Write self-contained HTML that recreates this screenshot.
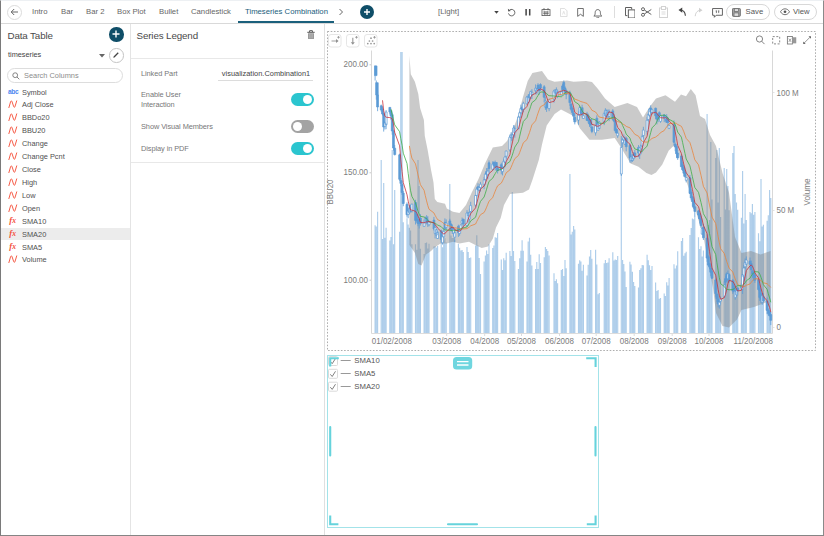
<!DOCTYPE html>
<html><head><meta charset="utf-8"><title>Timeseries Combination</title>
<style>
*{box-sizing:border-box;margin:0;padding:0}
html,body{width:824px;height:536px;overflow:hidden;background:#fff}
body{position:relative;font-family:"Liberation Sans",sans-serif;color:#555;font-size:8px}
.abs{position:absolute}
#frame{position:absolute;left:0;top:0;width:824px;height:536px;border-left:1px solid #7a7a7a;border-right:1px solid #8a8a8a;border-bottom:1.5px solid #858585;border-top:1.600px solid #edf0f3;pointer-events:none;z-index:50}
#topbar{position:absolute;left:0;top:0;width:824px;height:24px;border-bottom:1.600px solid #d9d9d9;background:#fff}
.tab{position:absolute;top:7.1px;font-size:7.720px;color:#666;white-space:nowrap;line-height:10px}
.tab.act{color:#1b607c}
#actline{position:absolute;left:238px;top:21.100px;width:96px;height:2.200px;background:#1b607c}
.circ{position:absolute;border-radius:50%}
.t10{font-size:9.800px;color:#4a4a4a;letter-spacing:-.13px}
.os{letter-spacing:0}
#left{position:absolute;left:1px;top:24px;width:130px;height:511px;border-right:1px solid #e4e4e4}
#mid{position:absolute;left:131px;top:24px;width:194px;height:511px;border-right:1px solid #e0e0e0}
.row{position:absolute;left:1px;width:129px;height:13px;line-height:13px;font-size:7.4px;color:#505050;white-space:nowrap}
.row.sel{background:#ececec;height:12.100px}
.row .ic{position:absolute;left:7px;top:1.800px}
.row .abc{top:-.600px;left:7px;font-size:6.600px;font-weight:bold;color:#4d86f0;letter-spacing:-.3px}
.row .fx{top:-.700px;left:8.300px;font-size:8px;color:#f4503c;font-family:"Liberation Serif",serif;font-weight:bold}
.row .fx i{font-size:8.600px}.row .fx i.x{font-size:7.600px;margin-left:.2px}
.row .nm{position:absolute;left:21px;top:0}
.lbl{position:absolute;font-size:7.4px;letter-spacing:-.08px;color:#777;line-height:10px;white-space:nowrap}
.tog{position:absolute;left:291.300px;width:22.400px;height:12.800px;border-radius:7px;background:#2bc5cf}
.tog i{position:absolute;top:1.700px;right:1.700px;width:9.400px;height:9.400px;border-radius:50%;background:#fff}
.tog.off{background:#a3a3a3}
.tog.off i{right:auto;left:1.700px}
.ax{font-size:8.900px;fill:#7c7c7c;font-family:"Liberation Sans",sans-serif}
</style></head><body>
<div id="topbar">
  <div class="circ" style="left:7px;top:4.5px;width:15px;height:15px;border:1px solid #dcdcdc"></div>
  <svg class="abs" style="left:10px;top:8px" width="9" height="8" viewBox="0 0 9 8"><path d="M8 4H1.5M4.2 1L1.2 4l3 3" fill="none" stroke="#666" stroke-width="1"/></svg>
  <span class="tab" style="left:32px">Intro</span>
  <span class="tab" style="left:61px">Bar</span>
  <span class="tab" style="left:86px">Bar 2</span>
  <span class="tab" style="left:117px">Box Plot</span>
  <span class="tab" style="left:159px">Bullet</span>
  <span class="tab" style="left:191px">Candlestick</span>
  <span class="tab act" style="left:245px">Timeseries Combination</span>
  <div id="actline"></div>
  <svg class="abs" style="left:338px;top:8px" width="6" height="8" viewBox="0 0 6 8"><path d="M1.5 1l3 3-3 3" fill="none" stroke="#666" stroke-width="1"/></svg>
  <div class="circ" style="left:360px;top:5px;width:14px;height:14px;background:#0f4e68"></div>
  <svg class="abs" style="left:363px;top:8px" width="8" height="8" viewBox="0 0 8 8"><path d="M4 1v6M1 4h6" stroke="#fff" stroke-width="1.4"/></svg>
  <span class="tab" style="left:438px;color:#666">[Light]</span>
  <svg class="abs" style="left:494px;top:11.200px" width="5" height="3" viewBox="0 0 6 4"><path d="M0 0h6L3 3.500z" fill="#444"/></svg>
  <!-- refresh -->
  <svg class="abs" style="left:506.500px;top:8.200px" width="9" height="9" viewBox="0 0 10 10"><path d="M3 2.2A3.6 3.6 0 1 1 1.6 6" fill="none" stroke="#555" stroke-width="1"/><path d="M1 .8l.3 3 3-.6z" fill="#555"/></svg>
  <!-- pause -->
  <svg class="abs" style="left:524.800px;top:9.200px" width="6" height="6.500" viewBox="0 0 6 6.500"><path d="M1.100 0v6.500M4.700 0v6.500" stroke="#444" stroke-width="1.500"/></svg>
  <!-- calendar -->
  <svg class="abs" style="left:540.800px;top:8.300px" width="10" height="8" viewBox="0 0 11 10"><rect x=".5" y="2" width="10" height="7.5" fill="none" stroke="#555"/><path d="M3 0v3M8 0v3M2 5h7M2 7h7M4 4v5M7 4v5" stroke="#555" stroke-width=".9"/></svg>
  <!-- pdf disabled -->
  <svg class="abs" style="left:560.300px;top:8px" width="7.500" height="9" viewBox="0 0 9 11"><path d="M.5.5h5l3 3v7h-8z" fill="none" stroke="#d5d5d5"/><path d="M3 8l1.5-4L6 8" fill="none" stroke="#d5d5d5" stroke-width=".8"/></svg>
  <!-- bookmark -->
  <svg class="abs" style="left:577.300px;top:8.400px" width="7" height="9.200" viewBox="0 0 8 11"><path d="M.6.6h6.8v9.4L4 7.5.6 10z" fill="none" stroke="#555" stroke-width="1"/></svg>
  <!-- bell -->
  <svg class="abs" style="left:593.300px;top:7.600px" width="9.600" height="10.500" viewBox="0 0 11 12"><path d="M1 9.2h9c-1.3-1-1.5-2-1.5-4 0-2-1.300-3.400-3-3.400S2.500 3.200 2.500 5.200c0 2-.2 3-1.500 4z" fill="none" stroke="#555" stroke-width="1"/><path d="M4.300 10.300a1.200 1.200 0 0 0 2.400 0" fill="none" stroke="#555" stroke-width=".9"/></svg>
  <div class="abs" style="left:614px;top:6px;width:1px;height:12px;background:#ddd"></div>
  <!-- copy -->
  <svg class="abs" style="left:624.500px;top:6.500px" width="10.500" height="11.500" viewBox="0 0 11 12"><path d="M.5.5h6.500v2M.5.500v8.500h2" fill="none" stroke="#555"/><rect x="3.500" y="3" width="7" height="8.500" fill="#fff" stroke="#555"/></svg>
  <!-- scissors -->
  <svg class="abs" style="left:641px;top:7px" width="11" height="10" viewBox="0 0 11 10"><circle cx="2" cy="2.200" r="1.500" fill="none" stroke="#555" stroke-width=".9"/><circle cx="2" cy="7.800" r="1.500" fill="none" stroke="#555" stroke-width=".9"/><path d="M3.300 3l7 4.500M3.300 7l7-4.500" stroke="#555" stroke-width=".9"/></svg>
  <!-- paste disabled -->
  <svg class="abs" style="left:659px;top:6px" width="9" height="12" viewBox="0 0 9 12"><rect x=".5" y="2" width="8" height="9.500" fill="none" stroke="#d2d2d2"/><rect x="2.500" y=".5" width="4" height="3" fill="#fff" stroke="#d2d2d2"/><path d="M2.500 6h4M2.500 8h4" stroke="#d2d2d2" stroke-width=".8"/></svg>
  <!-- undo -->
  <svg class="abs" style="left:677.500px;top:7px" width="9.500" height="9.500" viewBox="0 0 10 10"><path d="M2 3.200c3 0 5.500 2 5.800 6" fill="none" stroke="#444" stroke-width="1.200"/><path d="M.5 3.200L4.500.4v5.600z" fill="#444"/></svg>
  <!-- redo disabled -->
  <svg class="abs" style="left:693px;top:7px" width="10" height="10" viewBox="0 0 10 10"><path d="M8 3.200c-3 0-5.500 2-5.800 6" fill="none" stroke="#d0d0d0" stroke-width="1"/><path d="M9.500 3.200L6 .8v4.800z" fill="#d0d0d0"/></svg>
  <!-- comment -->
  <svg class="abs" style="left:711.500px;top:8px" width="11" height="10" viewBox="0 0 12 11"><path d="M.6.600h10.800v7.400H4.500L2.500 10.200V8H.6z" fill="none" stroke="#555" stroke-width="1"/><path d="M4 3.200h1.500M6.500 3.200H8M4.800 3.200v2.400M7.300 3.200v2.400" stroke="#555" stroke-width=".8"/></svg>
  <!-- save -->
  <div class="abs" style="left:725.800px;top:4.400px;width:44px;height:15.300px;border:1px solid #d8d8d8;border-radius:8px"></div>
  <svg class="abs" style="left:732.200px;top:7.800px" width="8.800" height="8.800" viewBox="0 0 10 10"><rect x=".5" y=".5" width="9" height="9" rx="1" fill="#a8a8a8" stroke="#666"/><rect x="2.600" y=".8" width="4.800" height="3" fill="#ddd" stroke="#666" stroke-width=".8"/><rect x="2.300" y="5.600" width="5.400" height="3.800" fill="#ddd" stroke="#666" stroke-width=".8"/></svg>
  <span class="tab" style="left:745.600px;color:#555">Save</span>
  <!-- view -->
  <div class="abs" style="left:773.900px;top:4.400px;width:43px;height:15.300px;border:1px solid #d8d8d8;border-radius:8px"></div>
  <svg class="abs" style="left:780.200px;top:8.400px" width="10" height="7.500" viewBox="0 0 11 8"><path d="M.5 4C2 1.500 3.800.800 5.500.800S9 1.500 10.500 4C9 6.500 7.200 7.200 5.500 7.200S2 6.500.5 4z" fill="none" stroke="#555" stroke-width=".9"/><circle cx="5.500" cy="4" r="1.500" fill="#555"/></svg>
  <span class="tab" style="left:793px;color:#555">View</span>
</div>

<div id="left"></div>
<div class="abs t10" style="left:7.500px;top:28.900px;line-height:13px">Data Table</div>
<div class="circ" style="left:109px;top:27.200px;width:14.500px;height:14.500px;background:#0f4e68"></div>
<svg class="abs" style="left:112.250px;top:30.450px" width="8" height="8" viewBox="0 0 8 8"><path d="M4 .5v7M.5 4h7" stroke="#fff" stroke-width="1.400"/></svg>
<div class="abs os" style="left:8px;top:50.300px;font-size:7.3px;color:#444;line-height:10px">timeseries</div>
<svg class="abs" style="left:99px;top:53.500px" width="6" height="4" viewBox="0 0 6 4"><path d="M0 0h6L3 3.500z" fill="#666"/></svg>
<div class="circ" style="left:109px;top:48px;width:14.500px;height:14.500px;border:1px solid #c4c4c4"></div>
<svg class="abs" style="left:112.250px;top:51.250px" width="8" height="8" viewBox="0 0 8 8"><path d="M1.300 6.700l.3-1.200L5.800 1.300l.9.900L2.500 6.400z" fill="#444"/></svg>
<div class="abs" style="left:7px;top:68px;width:116px;height:15px;border:1px solid #ddd;border-radius:8px"></div>
<svg class="abs" style="left:12px;top:72px" width="8" height="8" viewBox="0 0 8 8"><circle cx="3.200" cy="3.200" r="2.400" fill="none" stroke="#777" stroke-width=".9"/><path d="M5 5l2.300 2.300" stroke="#777" stroke-width=".9"/></svg>
<div class="abs os" style="left:24px;top:70.500px;font-size:7.4px;color:#8c8c8c;line-height:10px">Search Columns</div>
<div class="row" style="top:85.50px"><span class="ic abc">abc</span><span class="nm">Symbol</span></div>
<div class="row" style="top:98.42px"><svg class="ic" width="10" height="9" viewBox="0 0 10 9"><path d="M.9 7.6L2.600 1.700C2.900.700 3.600.600 4 1.600L5.700 6.600C6 7.600 6.700 7.500 7 6.500L8.700.900" fill="none" stroke="#f5543f" stroke-width=".95" stroke-linecap="round"/></svg><span class="nm">Adj Close</span></div>
<div class="row" style="top:111.34px"><svg class="ic" width="10" height="9" viewBox="0 0 10 9"><path d="M.9 7.6L2.600 1.700C2.900.700 3.600.600 4 1.600L5.700 6.600C6 7.600 6.700 7.500 7 6.500L8.700.900" fill="none" stroke="#f5543f" stroke-width=".95" stroke-linecap="round"/></svg><span class="nm">BBDo20</span></div>
<div class="row" style="top:124.26px"><svg class="ic" width="10" height="9" viewBox="0 0 10 9"><path d="M.9 7.6L2.600 1.700C2.900.700 3.600.600 4 1.600L5.700 6.600C6 7.600 6.700 7.500 7 6.500L8.700.900" fill="none" stroke="#f5543f" stroke-width=".95" stroke-linecap="round"/></svg><span class="nm">BBU20</span></div>
<div class="row" style="top:137.18px"><svg class="ic" width="10" height="9" viewBox="0 0 10 9"><path d="M.9 7.6L2.600 1.700C2.900.700 3.600.600 4 1.600L5.700 6.600C6 7.600 6.700 7.500 7 6.500L8.700.900" fill="none" stroke="#f5543f" stroke-width=".95" stroke-linecap="round"/></svg><span class="nm">Change</span></div>
<div class="row" style="top:150.10px"><svg class="ic" width="10" height="9" viewBox="0 0 10 9"><path d="M.9 7.6L2.600 1.700C2.900.700 3.600.600 4 1.600L5.700 6.600C6 7.600 6.700 7.500 7 6.500L8.700.900" fill="none" stroke="#f5543f" stroke-width=".95" stroke-linecap="round"/></svg><span class="nm">Change Pcnt</span></div>
<div class="row" style="top:163.02px"><svg class="ic" width="10" height="9" viewBox="0 0 10 9"><path d="M.9 7.6L2.600 1.700C2.900.700 3.600.600 4 1.600L5.700 6.600C6 7.600 6.700 7.500 7 6.500L8.700.900" fill="none" stroke="#f5543f" stroke-width=".95" stroke-linecap="round"/></svg><span class="nm">Close</span></div>
<div class="row" style="top:175.94px"><svg class="ic" width="10" height="9" viewBox="0 0 10 9"><path d="M.9 7.6L2.600 1.700C2.900.700 3.600.600 4 1.600L5.700 6.600C6 7.600 6.700 7.500 7 6.500L8.700.900" fill="none" stroke="#f5543f" stroke-width=".95" stroke-linecap="round"/></svg><span class="nm">High</span></div>
<div class="row" style="top:188.86px"><svg class="ic" width="10" height="9" viewBox="0 0 10 9"><path d="M.9 7.6L2.600 1.700C2.900.700 3.600.600 4 1.600L5.700 6.600C6 7.600 6.700 7.500 7 6.500L8.700.900" fill="none" stroke="#f5543f" stroke-width=".95" stroke-linecap="round"/></svg><span class="nm">Low</span></div>
<div class="row" style="top:201.78px"><svg class="ic" width="10" height="9" viewBox="0 0 10 9"><path d="M.9 7.6L2.600 1.700C2.900.700 3.600.600 4 1.600L5.700 6.600C6 7.600 6.700 7.500 7 6.500L8.700.900" fill="none" stroke="#f5543f" stroke-width=".95" stroke-linecap="round"/></svg><span class="nm">Open</span></div>
<div class="row" style="top:214.70px"><span class="ic fx"><i>f</i><i class="x">x</i></span><span class="nm">SMA10</span></div>
<div class="row sel" style="top:227.62px"><span class="ic fx"><i>f</i><i class="x">x</i></span><span class="nm">SMA20</span></div>
<div class="row" style="top:240.54px"><span class="ic fx"><i>f</i><i class="x">x</i></span><span class="nm">SMA5</span></div>
<div class="row" style="top:253.46px"><svg class="ic" width="10" height="9" viewBox="0 0 10 9"><path d="M.9 7.6L2.600 1.700C2.900.700 3.600.600 4 1.600L5.700 6.600C6 7.600 6.700 7.500 7 6.500L8.700.900" fill="none" stroke="#f5543f" stroke-width=".95" stroke-linecap="round"/></svg><span class="nm">Volume</span></div>

<div id="mid"></div>
<div class="abs t10" style="left:136.500px;top:28.900px;line-height:13px">Series Legend</div>
<svg class="abs" style="left:306.500px;top:29.800px" width="8" height="10" viewBox="0 0 8 10"><path d="M.3 2.300h7.400M2.600 2V.7h2.800V2" fill="none" stroke="#555" stroke-width="1"/><path d="M1 3.200h6v5.300q0 .6-.6.600H1.600q-.6 0-.6-.6z" fill="#9a9a9a"/><path d="M2.700 4v4.300M4 4v4.300M5.300 4v4.300" stroke="#c4c4c4" stroke-width=".5"/></svg>
<div class="abs" style="left:131px;top:58px;width:193px;height:1px;background:#e8e8e8"></div>
<div class="lbl" style="left:141px;top:68.500px">Linked Part</div>
<div class="lbl" style="left:221.800px;top:68.500px;color:#444;letter-spacing:.02px">visualization.Combination1</div>
<div class="abs" style="left:218px;top:79.600px;width:95px;height:1px;background:#dcdcdc"></div>
<div class="lbl" style="left:141px;top:90.400px">Enable User<br>Interaction</div>
<div class="tog" style="top:93.300px"><i></i></div>
<div class="lbl" style="left:141px;top:122.300px">Show Visual Members</div>
<div class="tog off" style="top:120.200px"><i></i></div>
<div class="lbl" style="left:141px;top:143.800px">Display in PDF</div>
<div class="tog" style="top:142.200px"><i></i></div>
<div class="abs" style="left:131px;top:162px;width:193px;height:1px;background:#e8e8e8"></div>

<!-- chart -->
<svg class="abs" style="left:0;top:0" width="824" height="536" viewBox="0 0 824 536">
<rect x="327.500" y="31.500" width="488" height="319" fill="none" stroke="#adadad" stroke-width="1" stroke-dasharray="1.600 1.600"/>
<g fill="#fff" stroke="#e6e6e6" stroke-width="1">
<rect x="328.500" y="34.500" width="12.500" height="12.500" rx="2.500"/><rect x="346.500" y="34.500" width="12.500" height="12.500" rx="2.500"/><rect x="364.500" y="34.500" width="12.500" height="12.500" rx="2.500"/>
</g>
<g stroke="#909090" stroke-width=".8" fill="none">
<path d="M331.500 41h5M352.800 37.800v5" stroke-width="1.200" stroke="#a0a0a0"/>
<path d="M338.500 36v2.600M337.200 37.300h2.600M356.500 36v2.600M355.200 37.300h2.600M374.500 36v2.600M373.200 37.300h2.600"/>
</g>
<path d="M336 39l2.600 2-2.600 2zM350.800 42.200l2 2.600 2-2.600z" fill="#909090"/>
<g fill="#959595"><circle cx="371" cy="38.200" r=".85"/><circle cx="369.400" cy="41" r=".85"/><circle cx="372.600" cy="41" r=".85"/><circle cx="367.800" cy="43.600" r=".85"/><circle cx="371" cy="43.600" r=".85"/><circle cx="374.200" cy="43.600" r=".85"/></g>
<!-- right icons -->
<g fill="none" stroke="#7d7d7d" stroke-width=".95">
<circle cx="759.500" cy="39" r="3.100"/><path d="M761.700 41.300l2.800 2.800"/>
<rect x="772.700" y="36.600" width="7" height="7.300" stroke-dasharray="2 1.600" stroke-width=".9"/>
<rect x="787.400" y="36.500" width="5" height="7.500" stroke-width=".9"/>
<path d="M788.800 38.600l2.300 3.300M791.100 38.600l-2.300 3.300" stroke-width=".7"/>
<path d="M804.200 43l5.800-5.800" stroke-width=".8"/>
</g>
<rect x="792.800" y="37.300" width="3.500" height="6" fill="#aaa"/>
<path d="M793.800 37.300v6M795.200 37.300v6" stroke="#777" stroke-width=".5"/>
<path d="M811 36.300v2.500l-2.500-2.500zM803.200 44v-2.500l2.500 2.500z" fill="#666"/>
<!-- axes -->
<path d="M371.500 50.500v283M772.500 333.500V50.500" fill="none" stroke="#d8d8d8" stroke-width="1"/><path d="M371.500 333.500H772.500M446.700 333.500v2.500M484.700 333.500v2.500M521.500 333.500v2.500M559.500 333.500v2.500M596.200 333.500v2.500M634.200 333.500v2.500M672.200 333.500v2.500M709 333.500v2.500" fill="none" stroke="#dcdcdc" stroke-width="1"/>
<path d="M369.500 64.800h1.500M369.500 172.800h1.500M369.500 280.200h1.500" stroke="#c8c8c8"/><path d="M773 92.500h1.500M773 210.500h1.500M773 327.500h1.500" stroke="#e2e2e2"/>
<path d="M375.1 333V225.2M376.3 333V226.6M377.6 333V211.7M381.2 333V160M382.5 333V239.1M383.7 333V183M384.9 333V237.8M386.1 333V227.8M389.8 333V240.5M391 333V237M392.2 333V150M393.5 333V244.2M394.7 333V190M399.6 333V231.8M400.8 333V52M402.1 333V52M403.3 333V222.2M407 333V218.2M408.2 333V224.4M409.4 333V227.7M410.6 333V230.6M411.9 333V244.3M415.5 333V244.3M416.8 333V249.8M418 333V160M419.2 333V186M420.4 333V248.8M424.1 333V253.9M425.3 333V243.1M426.6 333V242.6M427.8 333V248.5M429 333V243.8M433.9 333V246.6M435.1 333V246.2M436.4 333V247.4M437.6 333V246.1M441.2 333V238.3M442.5 333V247.3M443.7 333V240.4M444.9 333V238.3M446.2 333V242.5M449.8 333V184M451.1 333V235.4M452.3 333V237.9M453.5 333V237.8M454.7 333V239.8M458.4 333V243.7M459.6 333V247.7M460.9 333V250.5M462.1 333V250M463.3 333V252M467 333V247.1M468.2 333V251.9M469.4 333V257.9M470.7 333V257.5M475.6 333V245.6M476.8 333V235.3M478 333V245.5M479.2 333V258.1M480.5 333V274.1M484.1 333V261.4M485.4 333V255.5M486.6 333V250.4M487.8 333V253.9M489 333V244.3M492.7 333V248.1M493.9 333V245.4M495.2 333V237.3M496.4 333V237.8M497.6 333V233.1M501.3 333V259.4M502.5 333V270M503.7 333V258.3M505 333V260.3M506.2 333V252.8M509.9 333V251.1M511.1 333V255.9M512.3 333V192M513.5 333V251.1M514.8 333V261.1M518.4 333V269.1M519.7 333V258.3M520.9 333V250.7M522.1 333V240.3M523.3 333V250.7M527 333V261.5M528.2 333V241.5M529.5 333V237.7M530.7 333V254.8M531.9 333V265.5M535.6 333V269M536.8 333V261.9M538 333V269M539.2 333V254.2M540.5 333V263M544.2 333V257.2M545.4 333V247M546.6 333V248.9M547.8 333V251M549.1 333V255.6M554 333V273.3M555.2 333V281.1M556.4 333V279.2M557.6 333V283.2M561.3 333V270M562.5 333V269.1M563.8 333V275.9M565 333V259.9M566.2 333V268.2M569.9 333V174M571.1 333V234.5M572.3 333V231.8M573.6 333V225.9M574.8 333V229.6M578.5 333V263.8M579.7 333V260.3M580.9 333V261.5M582.1 333V270.7M583.4 333V264.7M587 333V275.4M588.2 333V264.7M589.5 333V256.6M590.7 333V250M591.9 333V258.7M595.6 333V249.7M596.8 333V264.4M598.1 333V294.3M599.3 333V292.9M604.2 333V263.3M605.4 333V260.1M606.6 333V262.9M607.9 333V262.4M609.1 333V258.2M612.8 333V252.2M614 333V260.4M615.2 333V259.4M616.4 333V259.9M617.7 333V255.9M621.3 333V172M622.6 333V260M623.8 333V264M625 333V271.4M626.2 333V286.9M629.9 333V261.7M631.1 333V264.6M632.4 333V271.8M633.6 333V282.1M634.8 333V285.9M638.5 333V287.5M639.7 333V270.1M640.9 333V268.3M642.2 333V264.9M643.4 333V265.3M647.1 333V254.7M648.3 333V260.2M649.5 333V265.3M650.7 333V270M652 333V266M655.6 333V282.5M656.9 333V290.9M658.1 333V290M659.3 333V298.7M660.5 333V297.9M664.2 333V293.6M665.4 333V296M666.7 333V282.2M667.9 333V285.5M669.1 333V277.9M674 333V264.3M675.2 333V268.6M676.5 333V265.4M677.7 333V251.3M681.4 333V240.9M682.6 333V238M683.8 333V255.7M685 333V253.3M686.2 333V251.7M689.9 333V235M691.2 333V228.1M692.4 333V218.4M693.6 333V219.3M694.8 333V216M698.5 333V237.3M699.7 333V248.9M701 333V246.2M702.2 333V256.5M703.4 333V250.6M707.1 333V114M708.3 333V225M709.5 333V220.1M710.8 333V142M712 333V199.6M715.7 333V158M716.9 333V150M718.1 333V202.6M719.3 333V148M720.6 333V217.1M724.2 333V168M725.5 333V209.4M726.7 333V169M727.9 333V186M729.1 333V210.3M732.8 333V153M734 333V146M735.2 333V194M736.5 333V202.4M737.7 333V209.8M741.4 333V217.8M742.6 333V171M743.8 333V223.6M745.1 333V194M746.3 333V220.1M750 333V212.1M751.2 333V213.2M752.4 333V204M753.6 333V214.7M754.9 333V212M758.5 333V233.3M759.8 333V241.2M761 333V179M762.2 333V226.4M763.4 333V224.7M767.1 333V220.7M768.3 333V215.3M769.6 333V190M770.8 333V198" stroke="#5b9bd5" stroke-opacity=".5" stroke-width="1.15" fill="none"/>
<polygon points="409.4,55.7 410.8,74.3 414.9,81.7 418.3,93.9 420.1,107.9 423.9,120 424.8,136 427.8,150.8 431,169.8 433.5,182.5 434.8,199 437.3,202 445,203.8 446.8,208.5 453,211.7 459.5,213 466,205 472,192 478.5,179 485,163.5 492.8,147.6 502,146 507,141 513.4,128.6 518,116 523,97 527.7,81 532.4,73 542,71 548,79.5 554.6,81.7 567,80.4 573.6,81.7 586,81 592,82 598,89 605,98.5 614.7,107 627.4,103 637,107 643,117.5 649.6,107 656,98.5 665.5,95.3 675,101.7 681,94.4 686,96.3 690.8,89 695.6,95.3 700,116 705,119 710,135 716,146 722.5,173 729,192.7 735,237 741.5,253 751,251 760.6,254.5 770.5,251 770.5,313 767,302 754,307 741.5,310 737,319.5 729,327.5 722.5,326 716,313 713,288 703.5,237 697,215 690.8,194 684.5,176 678,150.8 673.4,146 668.6,150.8 662.3,164.5 656,172.5 651.5,175 646.4,173 638.5,166.7 630.6,163.5 621,147.6 614.7,138 602,139.7 589.4,139.7 580,128.6 573.6,116 561,109.6 554.6,114 546.7,125.5 542,144.5 538.8,160 532.4,180 529,189.5 523,192.7 510,194 504,205 500.7,218 496,227.5 492.8,238.7 488,246.6 481.7,248 475.4,245 469,241.8 459.5,243.4 453,241.8 446.8,243.4 440.5,243.4 434,248 431,251 426,254.5 421.5,265.6 418.3,264 415,253 409.4,245" fill="#808080" fill-opacity=".42"/>
<path d="M375.1 65.5V80.5M376.3 80.5V99.7M377.6 91.5V111.2M381.2 104.6V111.7M382.5 106.5V115.5M383.7 112.9V131.6M384.9 121V129.5M386.1 110.1V129.2M389.8 107V114.4M391 110.4V120.1M392.2 112.6V134.7M393.5 129.7V150.7M394.7 145V155.4M399.6 153.6V180.9M400.8 178.2V186.3M402.1 180.7V195M403.3 190.9V206.2M407 202.3V217.5M408.2 207.5V218.2M409.4 205.2V214.3M410.6 204.8V212.3M411.9 203.7V212.6M415.5 199.8V224.5M416.8 211.8V222.8M418 218.9V226.2M419.2 217.4V228.5M420.4 214.1V225.6M424.1 219.6V226.7M425.3 216.5V223.2M426.6 215.1V224.4M427.8 216.1V226.9M429 221.2V226.3M433.9 216.9V230.5M435.1 224.9V238.4M436.4 229V235.5M437.6 231.1V238.9M441.2 229.5V242.5M442.5 234.8V244.6M443.7 227.7V238.5M444.9 218.4V230.1M446.2 219.4V230.6M449.8 218.8V225.7M451.1 223.6V231.2M452.3 224.8V234M453.5 227.7V236.5M454.7 228.9V242.1M458.4 224.7V236.9M459.6 227.8V235.7M460.9 224.5V230.7M462.1 217.6V224.8M463.3 218.7V228.2M467 210.2V227.1M468.2 211.9V217.1M469.4 208.7V221.8M470.7 201.8V213.3M475.6 195.2V207.2M476.8 186.9V196.6M478 183.3V190.5M479.2 186V191.5M480.5 181.9V191.6M484.1 176.9V189.2M485.4 172.6V184.4M486.6 168.1V178.7M487.8 168.1V178.8M489 160.4V173.1M492.7 161.3V170.7M493.9 161.5V167.6M495.2 160.6V170.3M496.4 162.1V171M497.6 165.7V173.5M501.3 162.7V174.3M502.5 166.7V175.4M503.7 158.5V169.3M505 156.4V167.1M506.2 150.6V159.4M509.9 134.5V151.8M511.1 132.3V140.9M512.3 133.3V140.8M513.5 125.2V137M514.8 125.3V137.7M518.4 115.6V129.3M519.7 111.4V117.6M520.9 104.6V117.8M522.1 106.6V113.8M523.3 101.7V112.2M527 95.8V104.7M528.2 94.4V103M529.5 92.4V100.5M530.7 90.7V99.2M531.9 89.2V99M535.6 84.4V94.4M536.8 88.2V94.4M538 83.2V90.7M539.2 86.6V94.8M540.5 83.3V90.8M544.2 85.1V102.1M545.4 97.1V109.9M546.6 101.3V111.9M547.8 100.5V107.5M549.1 98.8V111.2M554 89.7V102.7M555.2 89V96.4M556.4 87.4V93.7M557.6 89.6V98.1M561.3 90.8V95.6M562.5 84.2V93.7M563.8 80.5V90.1M565 86.3V94.2M566.2 89.3V99.2M569.9 90.7V105.9M571.1 103V110.7M572.3 106.3V114.8M573.6 111.4V120.1M574.8 113.6V124.4M578.5 111.1V124.8M579.7 105.9V117.4M580.9 107.9V114.5M582.1 104.7V117.3M583.4 112.6V118.9M587 111.8V120.9M588.2 113.6V123.2M589.5 118.9V126.9M590.7 119.1V127.9M591.9 125.7V133.2M595.6 124.7V135.6M596.8 115.3V126.3M598.1 121.5V130.9M599.3 121.1V128.9M604.2 111.8V125.1M605.4 108.2V117M606.6 109.5V118.6M607.9 109.5V118.2M609.1 109.5V121.2M612.8 109.1V120.3M614 114V122.2M615.2 117.9V132.4M616.4 128.5V134.1M617.7 130.4V137.9M621.3 136V176M622.6 138.1V147.2M623.8 134.5V142.3M625 136.6V144.8M626.2 136.7V151.3M629.9 143.8V162.7M631.1 154.4V162.7M632.4 154V162M633.6 152.1V160.6M634.8 149.9V158.2M638.5 145.1V157.1M639.7 147V159M640.9 144.5V154M642.2 134.6V150.6M643.4 126.8V139.2M647.1 117.1V134.6M648.3 113V121.6M649.5 108.4V116.8M650.7 105.3V114.7M652 108.9V114.6M655.6 107.7V119.1M656.9 112.9V124.3M658.1 113.7V122.2M659.3 111.3V119.9M660.5 114.9V122.8M664.2 114V122.2M665.4 115.6V121.1M666.7 114.2V123M667.9 117.4V126.5M669.1 124.2V129.1M674 120.4V145.4M675.2 142.4V151.2M676.5 145.3V157.7M677.7 150V159.9M681.4 154.5V167.2M682.6 162.1V171M683.8 166.3V176.6M685 170.4V177.7M686.2 176.8V182.4M689.9 175V194.1M691.2 189.1V200.2M692.4 195.7V206.3M693.6 198.4V209.1M694.8 203.3V216.4M698.5 209.8V218.7M699.7 213.5V223.5M701 215.3V227.9M702.2 227.8V234.7M703.4 223.8V240M707.1 234.4V261.8M708.3 255.2V266M709.5 263.1V269.2M710.8 264.9V276.3M712 268V278.7M715.7 278.4V296.7M716.9 293.5V302.1M718.1 295.6V307.3M719.3 299.7V308.6M720.6 296.5V304.1M724.2 281.3V297.8M725.5 275.7V286.7M726.7 272.3V281.1M727.9 270.6V282.8M729.1 273.2V282.5M732.8 279V293.8M734 284V292.5M735.2 288.3V299.7M736.5 290V297.3M737.7 287.2V295.3M741.4 282.9V289.8M742.6 274.1V293.9M743.8 265V281M745.1 258.5V269.4M746.3 256.4V265.3M750 257.5V264.8M751.2 260.5V270.7M752.4 269.9V278.1M753.6 270.4V280.8M754.9 273.8V282.9M758.5 279.1V290.7M759.8 284.5V301M761 292.3V303.1M762.2 293.8V304.9M763.4 292.9V302.4M767.1 297.6V314.2M768.3 308.2V315.3M769.6 310.4V316.4M770.8 312.1V325.1" stroke="#5b9bd5" stroke-width=".8" fill="none"/>
<path d="M374.5 65.9h2.5v9.7h-2.5zM375.7 82.7h2.5v12.3h-2.5zM376.6 95h1.9v12h-1.9zM380.3 105.8h1.9v4.2h-1.9zM381.5 109h1.9v5h-1.9zM382.7 113.7h1.9v13.3h-1.9z" fill="#5b9bd5" stroke="#5b9bd5" stroke-width=".7"/>
<path d="M384 123h1.9v3.4h-1.9zM385.2 112h1.9v12.6h-1.9z" fill="#fff" stroke="#5b9bd5" stroke-width=".7"/>
<path d="M388.9 107.4h1.9v4.6h-1.9zM390.1 110.7h1.9v5.3h-1.9zM391.3 114.7h1.9v16.3h-1.9zM392.5 131.2h1.9v16.8h-1.9zM393.8 148.2h1.9v6.4h-1.9zM398.7 154.8h1.9v24.5h-1.9zM399.9 180.4h1.9v3h-1.9zM401.1 184.4h1.9v8.2h-1.9zM402.3 193.1h1.9v10.4h-1.9zM406 204.3h1.9v10.5h-1.9z" fill="#5b9bd5" stroke="#5b9bd5" stroke-width=".7"/>
<path d="M407.2 211.3h1.9v3.3h-1.9zM408.5 208.9h1.9v3.9h-1.9z" fill="#fff" stroke="#5b9bd5" stroke-width=".7"/>
<path d="M409.7 205.6h1.9v5.9h-1.9z" fill="#5b9bd5" stroke="#5b9bd5" stroke-width=".7"/>
<path d="M410.9 204.2h1.9v6.9h-1.9z" fill="#fff" stroke="#5b9bd5" stroke-width=".7"/>
<path d="M414.6 202.5h1.9v17.9h-1.9zM415.8 214.5h1.9v6.3h-1.9zM417 219.7h1.9v3.9h-1.9zM418.3 219.5h1.9v4.1h-1.9zM419.5 218.1h1.9v5.3h-1.9z" fill="#5b9bd5" stroke="#5b9bd5" stroke-width=".7"/>
<path d="M423.2 222.6h1.9v3.8h-1.9zM424.4 218.4h1.9v4.4h-1.9z" fill="#fff" stroke="#5b9bd5" stroke-width=".7"/>
<path d="M425.6 217.7h1.9v4h-1.9zM426.8 220h1.9v2.9h-1.9z" fill="#5b9bd5" stroke="#5b9bd5" stroke-width=".7"/>
<path d="M428.1 221.9h1.9v2.8h-1.9z" fill="#fff" stroke="#5b9bd5" stroke-width=".7"/>
<path d="M433 220.1h1.9v8.8h-1.9z" fill="#5b9bd5" stroke="#5b9bd5" stroke-width=".7"/>
<path d="M434.2 227.7h1.9v5.9h-1.9zM435.4 229.7h1.9v5.3h-1.9zM436.6 232.4h1.9v6.1h-1.9z" fill="#fff" stroke="#5b9bd5" stroke-width=".7"/>
<path d="M440.3 230.8h1.9v8.6h-1.9z" fill="#5b9bd5" stroke="#5b9bd5" stroke-width=".7"/>
<path d="M441.5 236.8h1.9v6h-1.9zM442.8 231.4h1.9v5.5h-1.9z" fill="#fff" stroke="#5b9bd5" stroke-width=".7"/>
<path d="M444 222.3h1.9v6.3h-1.9z" fill="#5b9bd5" stroke="#5b9bd5" stroke-width=".7"/>
<path d="M445.2 223.1h1.9v4.2h-1.9z" fill="#fff" stroke="#5b9bd5" stroke-width=".7"/>
<path d="M448.9 220.9h1.9v3.7h-1.9zM450.1 224h1.9v5.8h-1.9zM451.3 227.8h1.9v3.3h-1.9z" fill="#5b9bd5" stroke="#5b9bd5" stroke-width=".7"/>
<path d="M452.6 229.7h1.9v3.5h-1.9zM453.8 232.5h1.9v4.7h-1.9z" fill="#fff" stroke="#5b9bd5" stroke-width=".7"/>
<path d="M457.5 226.3h1.9v6.4h-1.9z" fill="#5b9bd5" stroke="#5b9bd5" stroke-width=".7"/>
<path d="M458.7 230.4h1.9v3.1h-1.9zM459.9 225h1.9v4.8h-1.9zM461.1 220.7h1.9v2.6h-1.9z" fill="#fff" stroke="#5b9bd5" stroke-width=".7"/>
<path d="M462.4 219.3h1.9v4.7h-1.9z" fill="#5b9bd5" stroke="#5b9bd5" stroke-width=".7"/>
<path d="M466 213h1.9v12.5h-1.9zM467.3 212.8h1.9v2.7h-1.9zM468.5 212.6h1.9v6.3h-1.9zM469.7 205.6h1.9v5.9h-1.9zM474.6 195.5h1.9v9.6h-1.9zM475.8 189.1h1.9v6.3h-1.9z" fill="#fff" stroke="#5b9bd5" stroke-width=".7"/>
<path d="M477.1 186.7h1.9v2.9h-1.9z" fill="#5b9bd5" stroke="#5b9bd5" stroke-width=".7"/>
<path d="M478.3 187.5h1.9v2.6h-1.9zM479.5 184.2h1.9v3.6h-1.9zM483.2 179.9h1.9v4.9h-1.9zM484.4 174.1h1.9v5.3h-1.9z" fill="#fff" stroke="#5b9bd5" stroke-width=".7"/>
<path d="M485.6 171.5h1.9v2.7h-1.9z" fill="#5b9bd5" stroke="#5b9bd5" stroke-width=".7"/>
<path d="M486.9 171.1h1.9v3.6h-1.9z" fill="#fff" stroke="#5b9bd5" stroke-width=".7"/>
<path d="M488.1 162.8h1.9v5.8h-1.9z" fill="#5b9bd5" stroke="#5b9bd5" stroke-width=".7"/>
<path d="M491.8 164.1h1.9v5.2h-1.9z" fill="#fff" stroke="#5b9bd5" stroke-width=".7"/>
<path d="M493 162.3h1.9v3.3h-1.9zM494.2 164h1.9v3.4h-1.9zM495.4 162.5h1.9v4.5h-1.9zM496.7 167.9h1.9v2.8h-1.9zM500.3 164.7h1.9v5.5h-1.9z" fill="#5b9bd5" stroke="#5b9bd5" stroke-width=".7"/>
<path d="M501.6 167.9h1.9v3.7h-1.9zM502.8 161.2h1.9v5.7h-1.9zM504 157h1.9v5.5h-1.9zM505.2 151.1h1.9v5.1h-1.9zM508.9 137.1h1.9v12.8h-1.9zM510.1 135.2h1.9v2.5h-1.9zM511.4 134.5h1.9v2.7h-1.9zM512.6 128h1.9v7.3h-1.9zM513.8 128.4h1.9v4.4h-1.9zM517.5 117.1h1.9v11.5h-1.9zM518.7 112.8h1.9v4.1h-1.9zM519.9 108.5h1.9v4.3h-1.9z" fill="#fff" stroke="#5b9bd5" stroke-width=".7"/>
<path d="M521.1 107.2h1.9v2.8h-1.9z" fill="#5b9bd5" stroke="#5b9bd5" stroke-width=".7"/>
<path d="M522.4 103.3h1.9v5.7h-1.9zM526 97.1h1.9v6.7h-1.9zM527.3 96.5h1.9v6.1h-1.9z" fill="#fff" stroke="#5b9bd5" stroke-width=".7"/>
<path d="M528.5 94.5h1.9v3.5h-1.9z" fill="#5b9bd5" stroke="#5b9bd5" stroke-width=".7"/>
<path d="M529.7 91.5h1.9v5.8h-1.9zM531 92.3h1.9v2.5h-1.9zM534.6 88.2h1.9v2.6h-1.9zM535.9 88.7h1.9v3.5h-1.9z" fill="#fff" stroke="#5b9bd5" stroke-width=".7"/>
<path d="M537.1 85.1h1.9v3.9h-1.9zM538.3 87.3h1.9v3.3h-1.9zM539.5 84.6h1.9v3.5h-1.9zM543.2 86.8h1.9v10.5h-1.9z" fill="#5b9bd5" stroke="#5b9bd5" stroke-width=".7"/>
<path d="M544.4 100.9h1.9v6.2h-1.9z" fill="#fff" stroke="#5b9bd5" stroke-width=".7"/>
<path d="M545.6 101.7h1.9v6.4h-1.9zM546.9 101.9h1.9v5.1h-1.9z" fill="#5b9bd5" stroke="#5b9bd5" stroke-width=".7"/>
<path d="M548.1 99.6h1.9v9h-1.9zM553 91.1h1.9v7.9h-1.9zM554.2 90.2h1.9v2.8h-1.9zM555.5 90.1h1.9v3h-1.9zM556.7 91.6h1.9v4.7h-1.9zM560.4 91.9h1.9v3.1h-1.9z" fill="#fff" stroke="#5b9bd5" stroke-width=".7"/>
<path d="M561.6 85.9h1.9v3.8h-1.9zM562.8 82.4h1.9v5.5h-1.9zM564 87.9h1.9v4.4h-1.9zM565.2 90.6h1.9v3.8h-1.9zM568.9 92.9h1.9v9.8h-1.9zM570.1 104.1h1.9v5.1h-1.9zM571.4 108.1h1.9v4.3h-1.9zM572.6 113.2h1.9v3h-1.9zM573.8 117.5h1.9v4.4h-1.9z" fill="#5b9bd5" stroke="#5b9bd5" stroke-width=".7"/>
<path d="M577.5 114.8h1.9v5.3h-1.9zM578.7 107.9h1.9v7h-1.9z" fill="#fff" stroke="#5b9bd5" stroke-width=".7"/>
<path d="M580 109.1h1.9v4.4h-1.9zM581.2 107.7h1.9v6.3h-1.9z" fill="#5b9bd5" stroke="#5b9bd5" stroke-width=".7"/>
<path d="M582.4 115.7h1.9v2.8h-1.9z" fill="#fff" stroke="#5b9bd5" stroke-width=".7"/>
<path d="M586.1 114.2h1.9v6.2h-1.9zM587.3 115.8h1.9v5h-1.9zM588.5 121.1h1.9v2.8h-1.9zM589.8 119.4h1.9v5.7h-1.9zM591 127h1.9v4.4h-1.9z" fill="#5b9bd5" stroke="#5b9bd5" stroke-width=".7"/>
<path d="M594.6 125.9h1.9v6.9h-1.9z" fill="#fff" stroke="#5b9bd5" stroke-width=".7"/>
<path d="M595.9 118.2h1.9v6.3h-1.9z" fill="#5b9bd5" stroke="#5b9bd5" stroke-width=".7"/>
<path d="M597.1 124.2h1.9v6h-1.9zM598.3 122.3h1.9v6.2h-1.9zM603.2 113.6h1.9v8h-1.9zM604.5 110.3h1.9v5.5h-1.9zM605.7 110.5h1.9v5.6h-1.9zM606.9 112.1h1.9v2.9h-1.9zM608.1 112.3h1.9v4.2h-1.9z" fill="#fff" stroke="#5b9bd5" stroke-width=".7"/>
<path d="M611.8 110.9h1.9v8.2h-1.9zM613 116.9h1.9v4.2h-1.9zM614.2 120.8h1.9v9.8h-1.9zM615.5 129.1h1.9v3.9h-1.9z" fill="#5b9bd5" stroke="#5b9bd5" stroke-width=".7"/>
<path d="M616.7 133.2h1.9v2.6h-1.9zM620.4 147.5h1.9v26.5h-1.9zM621.6 139.9h1.9v2.8h-1.9zM622.8 137.6h1.9v2.6h-1.9zM624 138.5h1.9v5.8h-1.9z" fill="#fff" stroke="#5b9bd5" stroke-width=".7"/>
<path d="M625.3 138.4h1.9v8.3h-1.9zM629 145.4h1.9v12.7h-1.9z" fill="#5b9bd5" stroke="#5b9bd5" stroke-width=".7"/>
<path d="M630.2 157h1.9v3.5h-1.9zM631.4 157.7h1.9v2.8h-1.9zM632.6 155.7h1.9v3h-1.9z" fill="#fff" stroke="#5b9bd5" stroke-width=".7"/>
<path d="M633.9 152.9h1.9v3.5h-1.9zM637.5 147.6h1.9v5.4h-1.9z" fill="#5b9bd5" stroke="#5b9bd5" stroke-width=".7"/>
<path d="M638.8 147.6h1.9v7.2h-1.9zM640 146.2h1.9v6.3h-1.9zM641.2 136.7h1.9v9.2h-1.9zM642.4 130.1h1.9v5.4h-1.9zM646.1 120.3h1.9v11.1h-1.9zM647.3 114.5h1.9v5.1h-1.9zM648.5 109h1.9v6.6h-1.9z" fill="#fff" stroke="#5b9bd5" stroke-width=".7"/>
<path d="M649.8 108h1.9v4.1h-1.9z" fill="#5b9bd5" stroke="#5b9bd5" stroke-width=".7"/>
<path d="M651 109.8h1.9v2.5h-1.9z" fill="#fff" stroke="#5b9bd5" stroke-width=".7"/>
<path d="M654.7 108.2h1.9v7.7h-1.9zM655.9 114.7h1.9v4.6h-1.9zM657.1 115.5h1.9v3.4h-1.9zM658.4 112.7h1.9v5.6h-1.9z" fill="#5b9bd5" stroke="#5b9bd5" stroke-width=".7"/>
<path d="M659.6 115.9h1.9v5.5h-1.9z" fill="#fff" stroke="#5b9bd5" stroke-width=".7"/>
<path d="M663.2 114.9h1.9v2.9h-1.9z" fill="#5b9bd5" stroke="#5b9bd5" stroke-width=".7"/>
<path d="M664.5 116.8h1.9v2.8h-1.9z" fill="#fff" stroke="#5b9bd5" stroke-width=".7"/>
<path d="M665.7 117h1.9v5.3h-1.9zM666.9 119.5h1.9v2.9h-1.9z" fill="#5b9bd5" stroke="#5b9bd5" stroke-width=".7"/>
<path d="M668.1 125.6h1.9v2.7h-1.9z" fill="#fff" stroke="#5b9bd5" stroke-width=".7"/>
<path d="M673 124.3h1.9v18h-1.9zM674.3 144h1.9v2.8h-1.9zM675.5 146.6h1.9v7.1h-1.9zM676.7 152.9h1.9v5h-1.9zM680.4 156.1h1.9v10.6h-1.9zM681.6 164.8h1.9v4.9h-1.9zM682.9 167.8h1.9v5.4h-1.9zM684.1 171.9h1.9v4.5h-1.9z" fill="#5b9bd5" stroke="#5b9bd5" stroke-width=".7"/>
<path d="M685.3 177.5h1.9v2.8h-1.9z" fill="#fff" stroke="#5b9bd5" stroke-width=".7"/>
<path d="M689 177.7h1.9v15.7h-1.9zM690.2 192h1.9v5.9h-1.9zM691.4 197.1h1.9v4.4h-1.9zM692.6 200.8h1.9v6.4h-1.9zM693.9 206.8h1.9v4.6h-1.9zM697.5 210.9h1.9v4.1h-1.9zM698.8 213.8h1.9v5.2h-1.9zM700 218.7h1.9v7h-1.9z" fill="#5b9bd5" stroke="#5b9bd5" stroke-width=".7"/>
<path d="M701.2 228.5h1.9v5.6h-1.9z" fill="#fff" stroke="#5b9bd5" stroke-width=".7"/>
<path d="M702.5 227.1h1.9v10.7h-1.9zM706.1 238.1h1.9v20h-1.9zM707.4 256.8h1.9v8.2h-1.9zM708.6 263.6h1.9v3.5h-1.9zM709.8 268.1h1.9v4.1h-1.9zM711 271.4h1.9v6.8h-1.9zM714.7 279.9h1.9v13.7h-1.9zM715.9 294.1h1.9v4.4h-1.9zM717.1 299.2h1.9v4.8h-1.9z" fill="#5b9bd5" stroke="#5b9bd5" stroke-width=".7"/>
<path d="M718.4 302.3h1.9v3h-1.9zM719.6 298.6h1.9v2.6h-1.9zM723.3 285.1h1.9v11.6h-1.9z" fill="#fff" stroke="#5b9bd5" stroke-width=".7"/>
<path d="M724.5 278.7h1.9v3.5h-1.9zM725.7 273.8h1.9v5.2h-1.9z" fill="#5b9bd5" stroke="#5b9bd5" stroke-width=".7"/>
<path d="M727 274h1.9v4.8h-1.9z" fill="#fff" stroke="#5b9bd5" stroke-width=".7"/>
<path d="M728.2 274.6h1.9v6.5h-1.9zM731.9 280.6h1.9v10.5h-1.9zM733.1 286.1h1.9v5h-1.9z" fill="#5b9bd5" stroke="#5b9bd5" stroke-width=".7"/>
<path d="M734.3 291.6h1.9v5.8h-1.9zM735.5 290.7h1.9v4.2h-1.9z" fill="#fff" stroke="#5b9bd5" stroke-width=".7"/>
<path d="M736.8 288h1.9v2.7h-1.9zM740.4 285h1.9v2.7h-1.9z" fill="#5b9bd5" stroke="#5b9bd5" stroke-width=".7"/>
<path d="M741.6 274.9h1.9v14.6h-1.9zM742.9 268h1.9v8.9h-1.9zM744.1 262.4h1.9v4.4h-1.9zM745.3 260.1h1.9v4.2h-1.9z" fill="#fff" stroke="#5b9bd5" stroke-width=".7"/>
<path d="M749 261.2h1.9v3h-1.9zM750.2 263.6h1.9v6.1h-1.9zM751.5 271.3h1.9v2.7h-1.9zM752.7 272.6h1.9v3.6h-1.9zM753.9 275h1.9v5.2h-1.9zM757.6 279.5h1.9v10.1h-1.9zM758.8 288.2h1.9v9.2h-1.9zM760 293.5h1.9v5.7h-1.9z" fill="#5b9bd5" stroke="#5b9bd5" stroke-width=".7"/>
<path d="M761.2 295.8h1.9v6.4h-1.9z" fill="#fff" stroke="#5b9bd5" stroke-width=".7"/>
<path d="M762.5 296.5h1.9v4.4h-1.9zM766.1 301h1.9v9.4h-1.9zM767.4 309.9h1.9v3.4h-1.9zM768.6 311.9h1.9v3.8h-1.9zM769.8 314.6h1.9v5.7h-1.9z" fill="#5b9bd5" stroke="#5b9bd5" stroke-width=".7"/>
<polyline points="409.4,145.9 410.6,152.7 411.9,158.2 415.5,163.9 416.8,169.4 418,174.9 419.2,179.7 420.4,184.7 424.1,190.3 425.3,195.6 426.6,200.9 427.8,205.5 429,209.2 433.9,212.9 435.1,215.3 436.4,217.6 437.6,219.6 441.2,221.4 442.5,222.5 443.7,223.5 444.9,224.5 446.2,225.1 449.8,226.1 451.1,226.6 452.3,227.1 453.5,227.4 454.7,227.8 458.4,228.3 459.6,228.7 460.9,229 462.1,229 463.3,229 467,228.6 468.2,227.8 469.4,227 470.7,225.8 475.6,224 476.8,221.4 478,219.1 479.2,216.9 480.5,214.7 484.1,212.5 485.4,210 486.6,207.2 487.8,204.2 489,201.2 492.7,197.7 493.9,194.4 495.2,191.2 496.4,188.3 497.6,185.8 501.3,183.1 502.5,180.9 503.7,178.3 505,175.5 506.2,172.8 509.9,169.9 511.1,167.2 512.3,164.4 513.5,161.4 514.8,158.7 518.4,155.5 519.7,152.5 520.9,149.2 522.1,146.1 523.3,142.8 527,139.5 528.2,136 529.5,132.6 530.7,128.8 531.9,124.9 535.6,120.8 536.8,116.8 538,113.2 539.2,109.9 540.5,106.7 544.2,104.8 545.4,103 546.6,101.7 547.8,100.7 549.1,99.2 554,97.9 555.2,96.8 556.4,95.9 557.6,95 561.3,94.4 562.5,94 563.8,93.6 565,93.3 566.2,93.4 569.9,94 571.1,95 572.3,96.2 573.6,97.5 574.8,99.1 578.5,100.4 579.7,101 580.9,101.6 582.1,101.9 583.4,102.3 587,103.4 588.2,104.9 589.5,106.6 590.7,108.3 591.9,110.3 595.6,112 596.8,113.7 598.1,115.6 599.3,117.1 604.2,118 605.4,118.4 606.6,118.5 607.9,118.5 609.1,118.3 612.8,118.1 614,118.4 615.2,119.6 616.4,120.5 617.7,121.5 621.3,122.8 622.6,123.8 623.8,124.6 625,125.3 626.2,126.4 629.9,127.8 631.1,129.3 632.4,131 633.6,132.6 634.8,134.3 638.5,136.2 639.7,138.1 640.9,139.9 642.2,141.1 643.4,142 647.1,142.1 648.3,141.7 649.5,140.7 650.7,139.6 652,138.4 655.6,137.1 656.9,136.1 658.1,135.2 659.3,134.2 660.5,132.6 664.2,130.6 665.4,128.6 666.7,126.8 667.9,125.2 669.1,123.6 674,123.1 675.2,123.1 676.5,123.4 677.7,124.5 681.4,126.3 682.6,128.8 683.8,131.7 685,135.1 686.2,138.4 689.9,142.5 691.2,146.6 692.4,150.8 693.6,155.2 694.8,159.8 698.5,164.8 699.7,169.8 701,175.3 702.2,180.6 703.4,186.4 707.1,193 708.3,199.1 709.5,205.1 710.8,211.1 712,217.1 715.7,223.4 716.9,229.8 718.1,236.4 719.3,242.7 720.6,248.7 724.2,253.3 725.5,257.5 726.7,261.4 727.9,264.8 729.1,268.2 732.8,272 734,275.6 735.2,278.9 736.5,282.1 737.7,284.7 741.4,286.2 742.6,286.7 743.8,286.7 745.1,286.2 746.3,285.3 750,283.9 751.2,282.4 752.4,280.9 753.6,279.6 754.9,278.7 758.5,278.9 759.8,279.7 761,280.7 762.2,281.8 763.4,282.8 767.1,283.7 768.3,284.8 769.6,286.1 770.8,287.5" fill="none" stroke="#e8853d" stroke-width=".8" stroke-linejoin="round"/>
<polyline points="391,109.2 392.2,114.7 393.5,120 394.7,124.8 399.6,131.7 400.8,138.6 402.1,145.2 403.3,153.2 407,163.5 408.2,173.4 409.4,182.7 410.6,190.8 411.9,196.4 415.5,203 416.8,207.1 418,211.2 419.2,214.3 420.4,216.3 424.1,217 425.3,217.7 426.6,219 427.8,220.2 429,221.9 433.9,222.8 435.1,223.5 436.4,224.1 437.6,225 441.2,226.6 442.5,228 443.7,229.3 444.9,230 446.2,230 449.8,230.3 451.1,230.3 452.3,230.7 453.5,230.7 454.7,230.7 458.4,230 459.6,229.4 460.9,228.7 462.1,228 463.3,228 467,226.9 468.2,225.2 469.4,223.3 470.7,220.9 475.6,217.2 476.8,212.9 478,208.8 479.2,205 480.5,201.4 484.1,197 485.4,193.1 486.6,189.2 487.8,185.1 489,181.4 492.7,178.2 493.9,175.9 495.2,173.7 496.4,171.6 497.6,170.3 501.3,169.3 502.5,168.7 503.7,167.4 505,166 506.2,164.2 509.9,161.5 511.1,158.5 512.3,155.2 513.5,151.3 514.8,147.1 518.4,141.7 519.7,136.2 520.9,131 522.1,126.3 523.3,121.5 527,117.5 528.2,113.6 529.5,110 530.7,106.3 531.9,102.7 535.6,99.8 536.8,97.4 538,95.5 539.2,93.5 540.5,92 544.2,92 545.4,92.5 546.6,93.5 547.8,95 549.1,95.7 554,96 555.2,96.2 556.4,96.3 557.6,96.4 561.3,96.8 562.5,96 563.8,94.7 565,93.1 566.2,91.9 569.9,92.2 571.1,94 572.3,96.2 573.6,98.8 574.8,101.8 578.5,104.1 579.7,106 580.9,108.5 582.1,110.7 583.4,112.8 587,114.6 588.2,115.8 589.5,116.9 590.7,117.8 591.9,118.8 595.6,119.9 596.8,121.5 598.1,122.6 599.3,123.4 604.2,123.2 605.4,122.2 606.6,121.2 607.9,120 609.1,118.7 612.8,117.5 614,117 615.2,117.6 616.4,118.5 617.7,119.6 621.3,122.4 622.6,125.4 623.8,128.1 625,130.7 626.2,134.1 629.9,138 631.1,141.6 632.4,144.4 633.6,146.6 634.8,148.9 638.5,150.1 639.7,150.8 640.9,151.7 642.2,151.5 643.4,149.9 647.1,146.1 648.3,141.8 649.5,137 650.7,132.6 652,127.9 655.6,124.2 656.9,121.4 658.1,118.7 659.3,116.8 660.5,115.4 664.2,115.2 665.4,115.4 666.7,116.7 667.9,117.7 669.1,119.3 674,122 675.2,124.7 676.5,128.2 677.7,132.1 681.4,137.2 682.6,142.4 683.8,148.1 685,153.5 686.2,159 689.9,165.8 691.2,171.3 692.4,176.8 693.6,182.1 694.8,187.5 698.5,192.3 699.7,197.2 701,202.5 702.2,207.7 703.4,213.7 707.1,220.2 708.3,226.9 709.5,233.5 710.8,240 712,246.6 715.7,254.5 716.9,262.5 718.1,270.3 719.3,277.7 720.6,283.7 724.2,286.4 725.5,288.2 726.7,289.4 727.9,289.5 729.1,289.8 732.8,289.6 734,288.8 735.2,287.6 736.5,286.4 737.7,285.6 741.4,285.9 742.6,285.2 743.8,284.1 745.1,282.9 746.3,280.8 750,278.1 751.2,276 752.4,274.2 753.6,272.8 754.9,271.7 758.5,271.9 759.8,274.2 761,277.3 762.2,280.6 763.4,284.7 767.1,289.3 768.3,293.7 769.6,297.9 770.8,302.3" fill="none" stroke="#3fae49" stroke-width=".8" stroke-linejoin="round"/>
<polyline points="382.5,100.3 383.7,110.6 384.9,116.2 386.1,117.2 389.8,117.6 391,118 392.2,118.8 393.5,123.8 394.7,132.3 399.6,145.8 400.8,159.3 402.1,171.6 403.3,182.7 407,194.7 408.2,201.1 409.4,206.2 410.6,210 411.9,210.1 415.5,211.3 416.8,213.2 418,216.1 419.2,218.5 420.4,222.4 424.1,222.8 425.3,222.3 426.6,221.9 427.8,221.8 429,221.5 433.9,222.8 435.1,224.6 436.4,226.2 437.6,228.1 441.2,231.6 442.5,233.2 443.7,233.9 444.9,233.7 446.2,231.9 449.8,228.9 451.1,227.5 452.3,227.4 453.5,227.6 454.7,229.5 458.4,231.1 459.6,231.3 460.9,230.1 462.1,228.3 463.3,226.6 467,222.6 468.2,219.1 469.4,216.6 470.7,213.6 475.6,207.9 476.8,203.1 478,198.5 479.2,193.4 480.5,189.1 484.1,186 485.4,183 486.6,180 487.8,176.7 489,173.6 492.7,170.4 493.9,168.7 495.2,167.4 496.4,166.5 497.6,166.9 501.3,168.1 502.5,168.6 503.7,167.4 505,165.4 506.2,161.5 509.9,154.9 511.1,148.3 512.3,143 513.5,137.2 514.8,132.6 518.4,128.6 519.7,124.2 520.9,119 522.1,115.4 523.3,110.3 527,106.4 528.2,103.1 529.5,101 530.7,97.3 531.9,95.1 535.6,93.3 536.8,91.7 538,89.9 539.2,89.8 540.5,88.9 544.2,90.7 545.4,93.2 546.6,97 547.8,100.3 549.1,102.6 554,101.3 555.2,99.2 556.4,95.6 557.6,92.5 561.3,91 562.5,90.7 563.8,90.2 565,90.7 566.2,91.2 569.9,93.4 571.1,97.3 572.3,102.2 573.6,106.9 574.8,112.4 578.5,114.9 579.7,114.7 580.9,114.9 582.1,114.4 583.4,113.2 587,114.3 588.2,116.9 589.5,119 590.7,121.2 591.9,124.3 595.6,125.4 596.8,126.2 598.1,126.2 599.3,125.7 604.2,122.1 605.4,119 606.6,116.2 607.9,113.8 609.1,111.8 612.8,112.9 614,115 615.2,119 616.4,123.2 617.7,127.4 621.3,131.9 622.6,135.7 623.8,137.1 625,138.2 626.2,140.9 629.9,144.1 631.1,147.6 632.4,151.6 633.6,155.1 634.8,157 638.5,156 639.7,154.1 640.9,151.8 642.2,148 643.4,142.7 647.1,136.2 648.3,129.6 649.5,122.1 650.7,117.2 652,113.1 655.6,112.3 656.9,113.2 658.1,115.2 659.3,116.5 660.5,117.7 664.2,118 665.4,117.6 666.7,118.2 667.9,119 669.1,121 674,125.9 675.2,131.9 676.5,138.2 677.7,145.3 681.4,153.5 682.6,159 683.8,164.2 685,168.8 686.2,172.7 689.9,178 691.2,183.7 692.4,189.3 693.6,195.5 694.8,202.3 698.5,206.6 699.7,210.8 701,215.6 702.2,219.9 703.4,225.2 707.1,233.8 708.3,243 709.5,251.3 710.8,260 712,268.1 715.7,275.2 716.9,281.9 718.1,289.3 719.3,295.3 720.6,299.4 724.2,297.7 725.5,294.4 726.7,289.4 727.9,283.8 729.1,280.3 732.8,281.5 734,283.3 735.2,285.8 736.5,289.1 737.7,291 741.4,290.3 742.6,287.1 743.8,282.4 745.1,276.7 746.3,270.6 750,265.9 751.2,264.9 752.4,266.1 753.6,268.8 754.9,272.9 758.5,277.9 759.8,283.5 761,288.5 762.2,292.4 763.4,296.6 767.1,300.7 768.3,303.9 769.6,307.2 770.8,312.1" fill="none" stroke="#c8323c" stroke-width=".8" stroke-linejoin="round"/>
<text class="ax" transform="translate(368,67.4) scale(.9,1)" text-anchor="end">200.00</text>
<text class="ax" transform="translate(368,175.3) scale(.9,1)" text-anchor="end">150.00</text>
<text class="ax" transform="translate(368,282.8) scale(.9,1)" text-anchor="end">100.00</text>
<text class="ax" transform="translate(776.5,95.6) scale(.9,1)" text-anchor="start">100 M</text>
<text class="ax" transform="translate(776.5,213.4) scale(.9,1)" text-anchor="start">50 M</text>
<text class="ax" transform="translate(776.5,330.4) scale(.9,1)" text-anchor="start">0</text>
<text class="ax" transform="translate(371.8,343.6) scale(.9,1)" text-anchor="start">01/02/2008</text>
<text class="ax" transform="translate(446.7,343.6) scale(.9,1)" text-anchor="middle">03/2008</text>
<text class="ax" transform="translate(484.7,343.6) scale(.9,1)" text-anchor="middle">04/2008</text>
<text class="ax" transform="translate(521.5,343.6) scale(.9,1)" text-anchor="middle">05/2008</text>
<text class="ax" transform="translate(559.5,343.6) scale(.9,1)" text-anchor="middle">06/2008</text>
<text class="ax" transform="translate(596.2,343.6) scale(.9,1)" text-anchor="middle">07/2008</text>
<text class="ax" transform="translate(634.2,343.6) scale(.9,1)" text-anchor="middle">08/2008</text>
<text class="ax" transform="translate(672.2,343.6) scale(.9,1)" text-anchor="middle">09/2008</text>
<text class="ax" transform="translate(709,343.6) scale(.9,1)" text-anchor="middle">10/2008</text>
<text class="ax" transform="translate(773,343.6) scale(.9,1)" text-anchor="end">11/20/2008</text>
<text class="ax" transform="translate(333.400,192) rotate(-90) scale(.9,1)" text-anchor="middle" style="font-size:8.800px">BBU20</text>
<text class="ax" transform="translate(810.400,192) rotate(-90) scale(.92,1)" text-anchor="middle" style="font-size:8.800px">Volume</text>

<!-- legend box -->
<rect x="327.500" y="355.500" width="271" height="172" fill="none" stroke="#a3e3e9" stroke-width="1"/>
<g fill="#fff" stroke="#dadada" stroke-width="1">
<rect x="328.500" y="356.500" width="9" height="9" rx="1"/><rect x="328.500" y="369.300" width="9" height="9" rx="1"/><rect x="328.500" y="382.200" width="9" height="9" rx="1"/>
</g>
<g fill="none" stroke="#808080" stroke-width="1">
<path d="M330.300 361.500l1.900 2.200 3.300-5.200"/><path d="M330.300 374.300l1.900 2.200 3.300-5.200"/><path d="M330.300 387.200l1.900 2.200 3.300-5.200"/>
</g>
<g fill="none" stroke="#66d3dc" stroke-width="2.100">
<path d="M330.200 366.500v-8.300h8.600"/><path d="M586.200 358.200h9.400v8.800"/><path d="M330.200 515.600v8.600h8.200"/><path d="M586.800 524.200h8.800v-8.600"/>
<path d="M330.200 427v28.500M595.500 427v28.500M448 524.200h29" stroke-linecap="round"/>
</g>
<rect x="453" y="357" width="19.200" height="12.600" rx="3.500" fill="#6fd6df"/>
<path d="M457 361.700h11.500M457 365h11.500" stroke="#fff" stroke-width="1.300"/>
<path d="M340.700 360.500h10M340.700 373.500h10M340.700 386.500h10" stroke="#999" stroke-width="1"/>
<text x="354.300" y="363.300" style="font-size:7.750px;fill:#555;font-family:'Liberation Sans',sans-serif">SMA10</text>
<text x="354.300" y="376.200" style="font-size:7.750px;fill:#555;font-family:'Liberation Sans',sans-serif">SMA5</text>
<text x="354.300" y="389.200" style="font-size:7.750px;fill:#555;font-family:'Liberation Sans',sans-serif">SMA20</text>
</svg>
<div id="frame"></div>
</body></html>
